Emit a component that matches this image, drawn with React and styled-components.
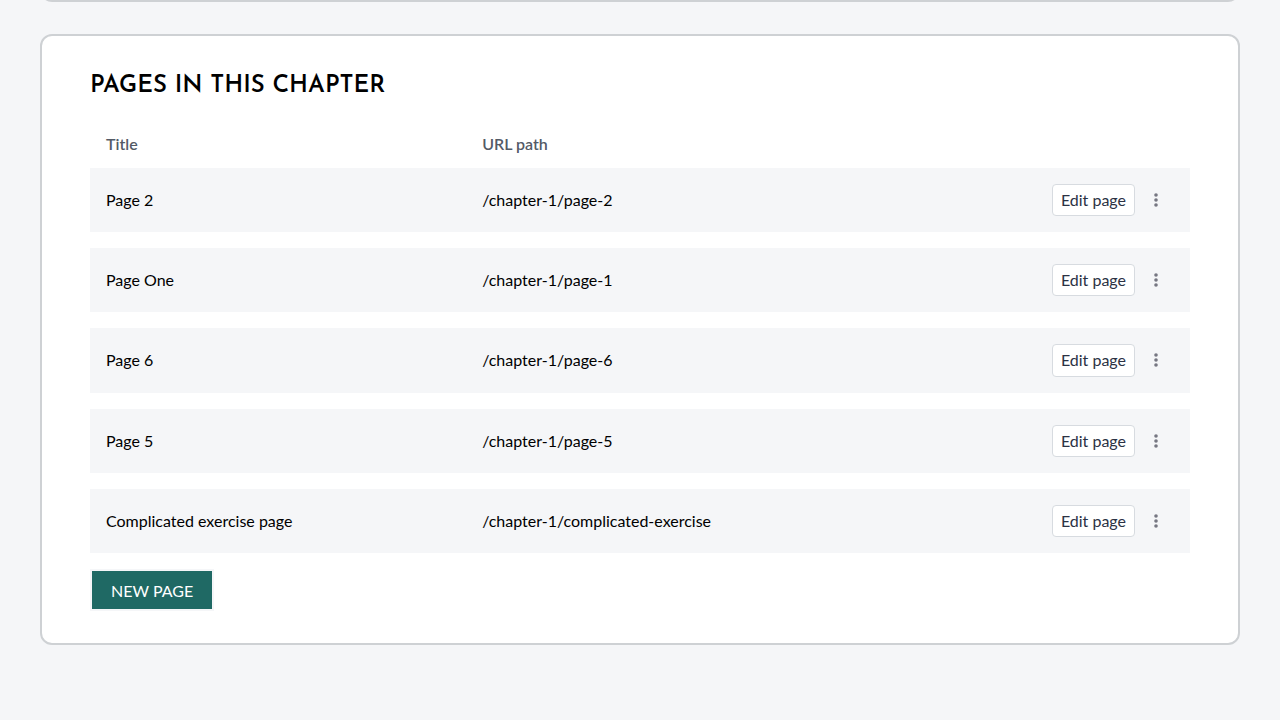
import React from "react";
import styled, { createGlobalStyle } from "styled-components";

const GlobalStyle = createGlobalStyle`
  *, *::before, *::after { box-sizing: border-box; }
  body {
    margin: 0;
    background: #f5f6f8;
    color: #000;
    font-family: Lato, sans-serif;
    font-size: 16px;
    line-height: 1.2;
  }
`;

const Page = styled.main`
  display: flex;
  flex-direction: column;
  gap: 32px;
  padding: 0 40px 72px;
  overflow: hidden;
`;

const Card = styled.section`
  padding: 32px 48px;
  background: #fff;
  border: 2px solid #ced1d4;
  border-radius: 12px;
`;

const ScrolledCard = styled(Card)`
  margin-top: -66px;
`;

const Heading = styled.h2`
  margin: 0 0 16px;
  font-family: "Josefin Sans", Lato, sans-serif;
  font-size: 24px;
  font-weight: 600;
  line-height: 36px;
  text-transform: uppercase;
`;

const PageTable = styled.table`
  width: 100%;
  table-layout: fixed;
  border-collapse: separate;
  border-spacing: 0 16px;
`;

const HeaderCell = styled.th`
  width: ${({ $width }) => $width};
  padding: 0 16px;
  color: #535a66;
  font-weight: 600;
  line-height: 16px;
  text-align: left;
`;

const Row = styled.tr`
  background: #f5f6f8;
`;

const Cell = styled.td`
  padding: 16px;
  vertical-align: baseline;
`;

const Actions = styled.div`
  display: flex;
  align-items: center;
  justify-content: flex-end;
  gap: 3px;
`;

const EditLink = styled.a`
  padding: 5px 8px 6px;
  background: #fff;
  border: 1px solid #d7dbe0;
  border-radius: 4px;
  color: #2b3244;
  text-decoration: none;
`;

const MenuButton = styled.button`
  display: flex;
  padding: 4px 10px;
  background: none;
  border: 0;
  color: #767782;
  cursor: pointer;
`;

const NewPageButton = styled.button`
  display: block;
  padding: 10px 19px 9px;
  background: #1f6964;
  border: 2px solid #f5f6f8;
  color: #fff;
  font: inherit;
  text-transform: uppercase;
  cursor: pointer;
`;

const DotsIcon = () => (
  <svg width="16" height="16" viewBox="0 0 16 16" fill="currentColor" aria-hidden="true">
    <circle cx="8" cy="3" r="1.8" />
    <circle cx="8" cy="8" r="1.8" />
    <circle cx="8" cy="13" r="1.8" />
  </svg>
);

const pages = [
  { title: "Page 2", path: "/chapter-1/page-2" },
  { title: "Page One", path: "/chapter-1/page-1" },
  { title: "Page 6", path: "/chapter-1/page-6" },
  { title: "Page 5", path: "/chapter-1/page-5" },
  { title: "Complicated exercise page", path: "/chapter-1/complicated-exercise" },
];

export default function App() {
  return (
    <>
      <GlobalStyle />
      <Page>
        <ScrolledCard />
        <Card>
          <Heading>Pages in this chapter</Heading>
          <PageTable>
            <thead>
              <tr>
                <HeaderCell $width="34.2%">Title</HeaderCell>
                <HeaderCell $width="34.2%">URL path</HeaderCell>
                <HeaderCell as="td" />
              </tr>
            </thead>
            <tbody>
              {pages.map(({ title, path }) => (
                <Row key={path}>
                  <Cell>{title}</Cell>
                  <Cell>{path}</Cell>
                  <Cell>
                    <Actions>
                      <EditLink href={path}>Edit page</EditLink>
                      <MenuButton type="button" aria-label={`More actions for ${title}`}>
                        <DotsIcon />
                      </MenuButton>
                    </Actions>
                  </Cell>
                </Row>
              ))}
            </tbody>
          </PageTable>
          <NewPageButton type="button">New page</NewPageButton>
        </Card>
      </Page>
    </>
  );
}
